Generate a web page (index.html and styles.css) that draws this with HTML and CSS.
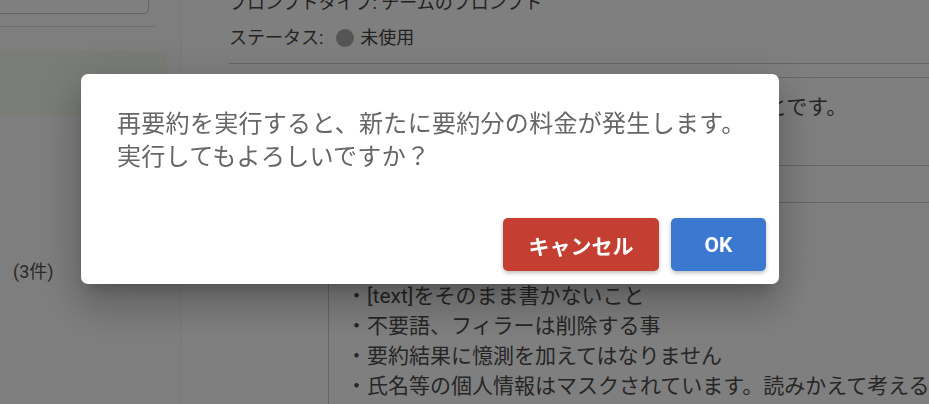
FILE: index.html
```html
<!DOCTYPE html>
<html lang="ja">
<head>
  <meta charset="UTF-8" />
  <meta name="viewport" content="width=device-width, initial-scale=1.0" />
  <title>プロンプト詳細</title>
  <link rel="stylesheet" href="styles.css">
</head>
<body>
  <div class="page">
    <aside class="sidebar">
      <div class="search"></div>
      <div class="sidebar-rule"></div>
      <div class="side-item active"></div>
      <div class="side-count"><span class="cut">、</span>(3件)</div>
    </aside>

    <main class="main">
      <div class="meta">
        <div class="meta-row">プロンプトタイプ: チームのプロンプト</div>
        <div class="meta-row">ステータス: <span class="dot"></span> 未使用</div>
      </div>

      <div class="field">
        <div class="field-label">説明</div>
        <div class="field-box short">あなたの役割は会話の内容を短く要約することです。</div>
      </div>

      <div class="field">
        <div class="field-label">プロンプト</div>
        <div class="field-box">
          <div>以下のルールを必ず守ってください。</div>
          <div>・簡潔にまとめること</div>
          <div>・[text]をそのまま書かないこと</div>
          <div>・不要語、フィラーは削除する事</div>
          <div>・要約結果に憶測を加えてはなりません</div>
          <div>・氏名等の個人情報はマスクされています。読みかえて考えること</div>
        </div>
      </div>
    </main>
  </div>

  <!-- confirm dialog over the dimmed page -->
  <div class="overlay">
    <div class="dialog">
      <p class="message">再要約を実行すると、新たに要約分の料金が発生します。<br>実行してもよろしいですか？</p>
      <div class="actions">
        <button class="btn cancel">キャンセル</button>
        <button class="btn ok">OK</button>
      </div>
    </div>
  </div>
</body>
</html>
```

FILE: styles.css
```css
body {
  margin: 0;
  font-family: Roboto, "Noto Sans CJK JP", sans-serif;
  color: #444;
  background: #fff;
  overflow: hidden;
}
.page {
  display: flex;
  height: 404px;
  overflow: hidden;
}
/* Sidebar */
.sidebar {
  flex: 0 0 180px;
  border-right: 1px solid #eee;
  background: #fcfcfc;
}
.search {
  height: 40px;
  margin: -28px 31px 0 -10px;
  border: 1px solid #ccc;
  border-radius: 5px;
  background: #fff;
}
.sidebar-rule {
  margin: 12px 25px 0 0;
  border-top: 1px solid #ddd;
}
.side-item.active {
  height: 65px;
  margin: 24px 13px 0 0;
  background: #f4f9ef;
}
.side-count {
  margin-top: 141px;
  font-size: 18px;
  color: #555;
  white-space: nowrap;
}
.side-count .cut { margin-left: -12px; margin-right: 7px; }
/* Main column */
.main {
  flex: 1;
  min-width: 0;
  padding-left: 48px;
  margin-top: -9px;
}
.meta {
  border-bottom: 1px solid #ccc;
  padding-bottom: 13px;
}
.meta-row {
  font-size: 18px;
  line-height: 24px;
  white-space: nowrap;
}
.meta-row + .meta-row { margin-top: 11px; }
.dot {
  display: inline-block;
  width: 18px;
  height: 18px;
  border-radius: 50%;
  background: #aaa;
  vertical-align: -3px;
  margin: 0 2px 0 8px;
}
.field {
  display: grid;
  grid-template-columns: 99px 1fr;
  margin-top: 13px;
}
.field + .field { margin-top: 36px; }
.field-label {
  font-size: 18px;
  padding-top: 14px;
}
.field-box {
  border: 1px solid #ccc;
  border-right: none;
  padding: 18px 17px;
  font-size: 21px;
  line-height: 30px;
  white-space: nowrap;
  color: #4c4c4c;
}
.field-box.short {
  height: 89px;
  box-sizing: border-box;
  padding-top: 14px;
}
/* Dialog */
.overlay {
  position: fixed;
  inset: 0;
  background: rgba(0, 0, 0, 0.5);
  display: flex;
  align-items: flex-start;
  padding: 74px 0 0 81px;
}
.dialog {
  width: 698px;
  box-sizing: border-box;
  padding: 34px 13px 13px 36px;
  background: #fff;
  border-radius: 7px;
  box-shadow: 0 11px 15px -7px rgba(0,0,0,.2), 0 24px 38px 3px rgba(0,0,0,.14), 0 9px 46px 8px rgba(0,0,0,.12);
}
.message {
  margin: 0 0 44px;
  font-size: 24px;
  line-height: 33px;
  letter-spacing: 0.3px;
  color: #666;
}
.actions {
  display: flex;
  justify-content: flex-end;
  gap: 12px;
}
.btn {
  height: 53px;
  border: none;
  border-radius: 5px;
  color: #fff;
  font-family: Roboto, "Noto Sans CJK JP", sans-serif;
  font-size: 21px;
  font-weight: 700;
  box-shadow: 0 2px 4px rgba(0,0,0,.25);
}
.cancel { width: 156px; background: #c43e31; }
.ok { width: 95px; background: #3b79d0; }
```
